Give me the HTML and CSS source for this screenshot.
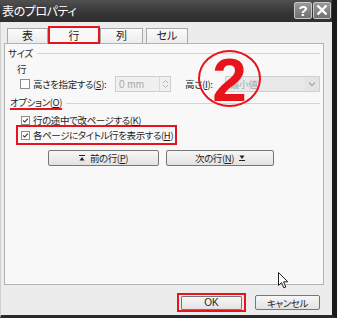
FILE: index.html
```html
<!DOCTYPE html>
<html lang="ja">
<head>
<meta charset="utf-8">
<title>表のプロパティ</title>
<link rel="stylesheet" href="styles.css">
</head>
<body>
<div class="window">
  <div class="titlebar">
    <span class="title">表のプロパティ</span>
    <div class="tb-buttons">
      <span class="tb-btn">?</span>
      <span class="tb-btn"><svg width="12" height="12" viewBox="0 0 12 12"><path d="M1.5 1.5 L10.5 10.5 M10.5 1.5 L1.5 10.5" stroke="#fff" stroke-width="2.4" fill="none"/></svg></span>
    </div>
  </div>
  <div class="tabs">
    <div class="tab">表</div>
    <div class="tab sel">行</div>
    <div class="tab">列</div>
    <div class="tab gap">セル</div>
  </div>
  <div class="panel">
    <div class="group-head"><span>サイズ</span><i class="rule"></i></div>
    <div class="sub">行</div>
    <div class="size-row">
      <span class="cb"></span>
      <span class="lbl">高さを指定する(<u>S</u>):</span>
      <span class="spin"><span class="val">0 mm</span><span class="spinbtn"><svg width="7" height="10" viewBox="0 0 7 10"><path d="M1 4 L3.5 1.5 L6 4 M1 6 L3.5 8.5 L6 6" stroke="#b5b5b5" fill="none"/></svg></span></span>
      <span class="lbl2">高さ(<u>I</u>):</span>
      <span class="select"><span class="selval">最小値</span><span class="arrow"><svg width="8" height="6" viewBox="0 0 8 6"><path d="M1 1.5 L4 4.5 L7 1.5" stroke="#a8a8a8" stroke-width="1.3" fill="none"/></svg></span></span>
    </div>
    <div class="group-head opt"><span class="uline">オプション(<u>O</u>)</span><i class="rule"></i></div>
    <div class="check-row"><span class="cb on"><svg width="9" height="9" viewBox="0 0 9 9"><path d="M1.5 4.5 L3.5 6.5 L7.5 2" stroke="#333" stroke-width="1.4" fill="none"/></svg></span><span class="ctext">行の途中で改ページする(<u>K</u>)</span></div>
    <div class="check-row hl"><span class="cb on"><svg width="9" height="9" viewBox="0 0 9 9"><path d="M1.5 4.5 L3.5 6.5 L7.5 2" stroke="#333" stroke-width="1.4" fill="none"/></svg></span><span class="ctext">各ページにタイトル行を表示する(<u>H</u>)</span></div>
    <div class="nav-row">
      <span class="btn nav1"><svg width="6" height="6" viewBox="0 0 6 6"><path d="M0 0.5 H6" stroke="#222"/><path d="M0.5 5.5 L3 2 L5.5 5.5 Z" fill="#222"/></svg><span class="btext">前の行(<u>P</u>)</span></span>
      <span class="btn nav2"><span class="btext">次の行(<u>N</u>)</span><svg width="6" height="6" viewBox="0 0 6 6"><path d="M0.5 0.5 L3 4 L5.5 0.5 Z" fill="#222"/><path d="M0 5.5 H6" stroke="#222"/></svg></span>
    </div>
  </div>
  <div class="footer">
    <span class="okwrap"><span class="btn ok">OK</span></span>
    <span class="btn cancel">キャンセル</span>
  </div>
  <div class="circle">2</div>
  <svg class="cursor" width="12" height="18" viewBox="0 0 12 18"><path d="M0.5 0.5 L0.5 13.5 L3.5 10.5 L5.8 15.8 L7.8 15 L5.6 9.8 L9.8 9.8 Z" fill="#fff" stroke="#222" stroke-width="1"/></svg>
</div>
</body>
</html>
```

FILE: styles.css
```css
* { box-sizing: border-box; }
html, body { margin: 0; padding: 0; }
body {
  width: 337px;
  height: 318px;
  overflow: hidden;
  font-family: "Noto Sans CJK JP", "Noto Sans", sans-serif;
  font-feature-settings: "palt";
  font-size: 9.5px;
  letter-spacing: -0.4px;
  color: #1e1e1e;
  white-space: nowrap;
}
u { text-decoration: underline; text-underline-offset: 1px; }

.window {
  position: relative;
  width: 337px;
  height: 318px;
  background: #ececec;
  border-right: 5px solid #1a1a1a;
  border-bottom: 3px solid #2a2a2a;
  border-left: 1px solid #d0d0d0;
}

.titlebar {
  height: 22px;
  margin-left: -1px;
  background: linear-gradient(#505050, #353535 60%, #2e2e2e);
  display: flex;
  align-items: center;
  justify-content: space-between;
  padding: 0 1px 0 2px;
}
.title {
  color: #fff;
  font-size: 12px;
  line-height: 14px;
  letter-spacing: -0.4px;
}
.tb-buttons { display: flex; gap: 1px; margin-top: -2px; }
.tb-btn {
  width: 18px;
  height: 17px;
  border: 1px solid #c8c8c8;
  border-radius: 2px;
  background: linear-gradient(#9a9a9a, #707070);
  color: #fff;
  font-family: "Liberation Sans", sans-serif;
  font-weight: bold;
  font-size: 15px;
  line-height: 15px;
  letter-spacing: 0;
  display: flex;
  align-items: center;
  justify-content: center;
}

.tabs {
  height: 17px;
  margin-top: 4px;
  padding-left: 6px;
  display: flex;
  align-items: flex-end;
  position: relative;
  z-index: 2;
}
.tab {
  height: 15px;
  border: 1px solid #a9a9a9;
  border-bottom: none;
  background: linear-gradient(#fbfbfb, #ececec);
  line-height: 13px;
  text-align: center;
  width: 41px;
  font-size: 11px;
  letter-spacing: 0;
}
.tab.sel {
  width: 52px;
  height: 18px;
  margin-bottom: -1px;
  border: 2px solid #e8141c;
  background: #f8f8f8;
  line-height: 14px;
}
.tab.gap { margin-left: 3px; width: 42px; }
.tab:nth-child(3) { width: 43px; }

.panel {
  width: 320px;
  height: 242px;
  margin-left: 3px;
  border: 1px solid #b3b3b3;
  background: #f8f8f8;
  padding: 2px 0 0 3px;
}

.group-head {
  display: flex;
  align-items: center;
  height: 14px;
  line-height: 14px;
  padding-right: 3px;
}
.group-head .rule {
  flex: 1;
  height: 1px;
  background: #d4d4d4;
  margin-left: 4px;
}
.sub {
  height: 14px;
  line-height: 14px;
  margin: 2px 0 0 9px;
}
.size-row {
  height: 16px;
  display: flex;
  align-items: center;
}
.cb {
  width: 10px;
  height: 10px;
  border: 1px solid #8e8e8e;
  background: #fff;
  display: inline-flex;
  align-items: center;
  justify-content: center;
  flex: none;
}
.size-row .cb { margin-left: 12px; }
.lbl { margin-left: 3px; width: 82px; flex: none; }
.spin {
  width: 56px;
  height: 16px;
  border: 1px solid #cfcfcf;
  background: #f0f0f0;
  display: flex;
  align-items: center;
  justify-content: space-between;
  padding-left: 3px;
  color: #a8a8a8;
  font-family: "Liberation Sans", sans-serif;
  font-size: 10px;
  letter-spacing: 0;
  flex: none;
}
.spinbtn {
  width: 11px;
  height: 14px;
  border-left: 1px solid #dadada;
  display: flex;
  align-items: center;
  justify-content: center;
}
.lbl2 { margin-left: 14px; width: 40px; flex: none; }
.select {
  width: 95px;
  height: 16px;
  border: 1px solid #cfcfcf;
  background: #e9e9e9;
  display: flex;
  align-items: center;
  justify-content: space-between;
  padding-left: 4px;
  color: #a8a8a8;
  flex: none;
}
.arrow {
  width: 14px;
  height: 14px;
  display: flex;
  align-items: center;
  justify-content: center;
  background: #e4e4e4;
}

.group-head.opt { margin-top: 4px; padding-left: 2px; }
.uline {
  display: inline-block;
  line-height: 12px;
  border-bottom: 2px solid #e8141c;
}
.opt .rule { align-self: flex-start; margin-top: 7px; }

.check-row {
  height: 14px;
  line-height: 14px;
  display: flex;
  align-items: center;
  margin-top: 3px;
  padding-left: 13px;
}
.check-row .cb { width: 9px; height: 9px; margin-right: 3px; }
.check-row.hl {
  width: 161px;
  height: 20px;
  margin: -2px 0 0 8px;
  padding-left: 3px;
  border: 2px solid #e8141c;
}

.nav-row {
  display: flex;
  margin-top: 5px;
  padding-left: 40px;
  gap: 7px;
}
.btn {
  height: 16px;
  border: 1px solid #767676;
  border-radius: 2px;
  background: linear-gradient(#f7f7f7, #e2e2e2);
  display: inline-flex;
  align-items: center;
  justify-content: center;
  line-height: 14px;
}
.nav1 { width: 111px; gap: 5px; }
.nav2 { width: 108px; gap: 5px; }

.footer {
  display: flex;
  justify-content: flex-end;
  align-items: center;
  margin-top: 8px;
  padding-right: 12px;
  gap: 9px;
}
.okwrap {
  width: 69px;
  height: 19px;
  border: 2px solid #e8141c;
  display: flex;
  align-items: center;
  justify-content: center;
}
.ok {
  width: 61px;
  height: 14px;
  font-family: "Liberation Sans", sans-serif;
  font-size: 10px;
  letter-spacing: 0;
  border-radius: 1px;
}
.cancel { width: 65px; height: 15px; }

.circle {
  position: absolute;
  left: 197px;
  top: 50px;
  width: 63px;
  height: 57px;
  border: 2px solid #e8141c;
  border-radius: 50%;
  color: #e8141c;
  font-family: "Liberation Sans", sans-serif;
  font-weight: bold;
  font-size: 62px;
  line-height: 55px;
  letter-spacing: 0;
  text-align: center;
  z-index: 3;
}
.cursor {
  position: absolute;
  left: 277px;
  top: 272px;
  z-index: 4;
}
```
